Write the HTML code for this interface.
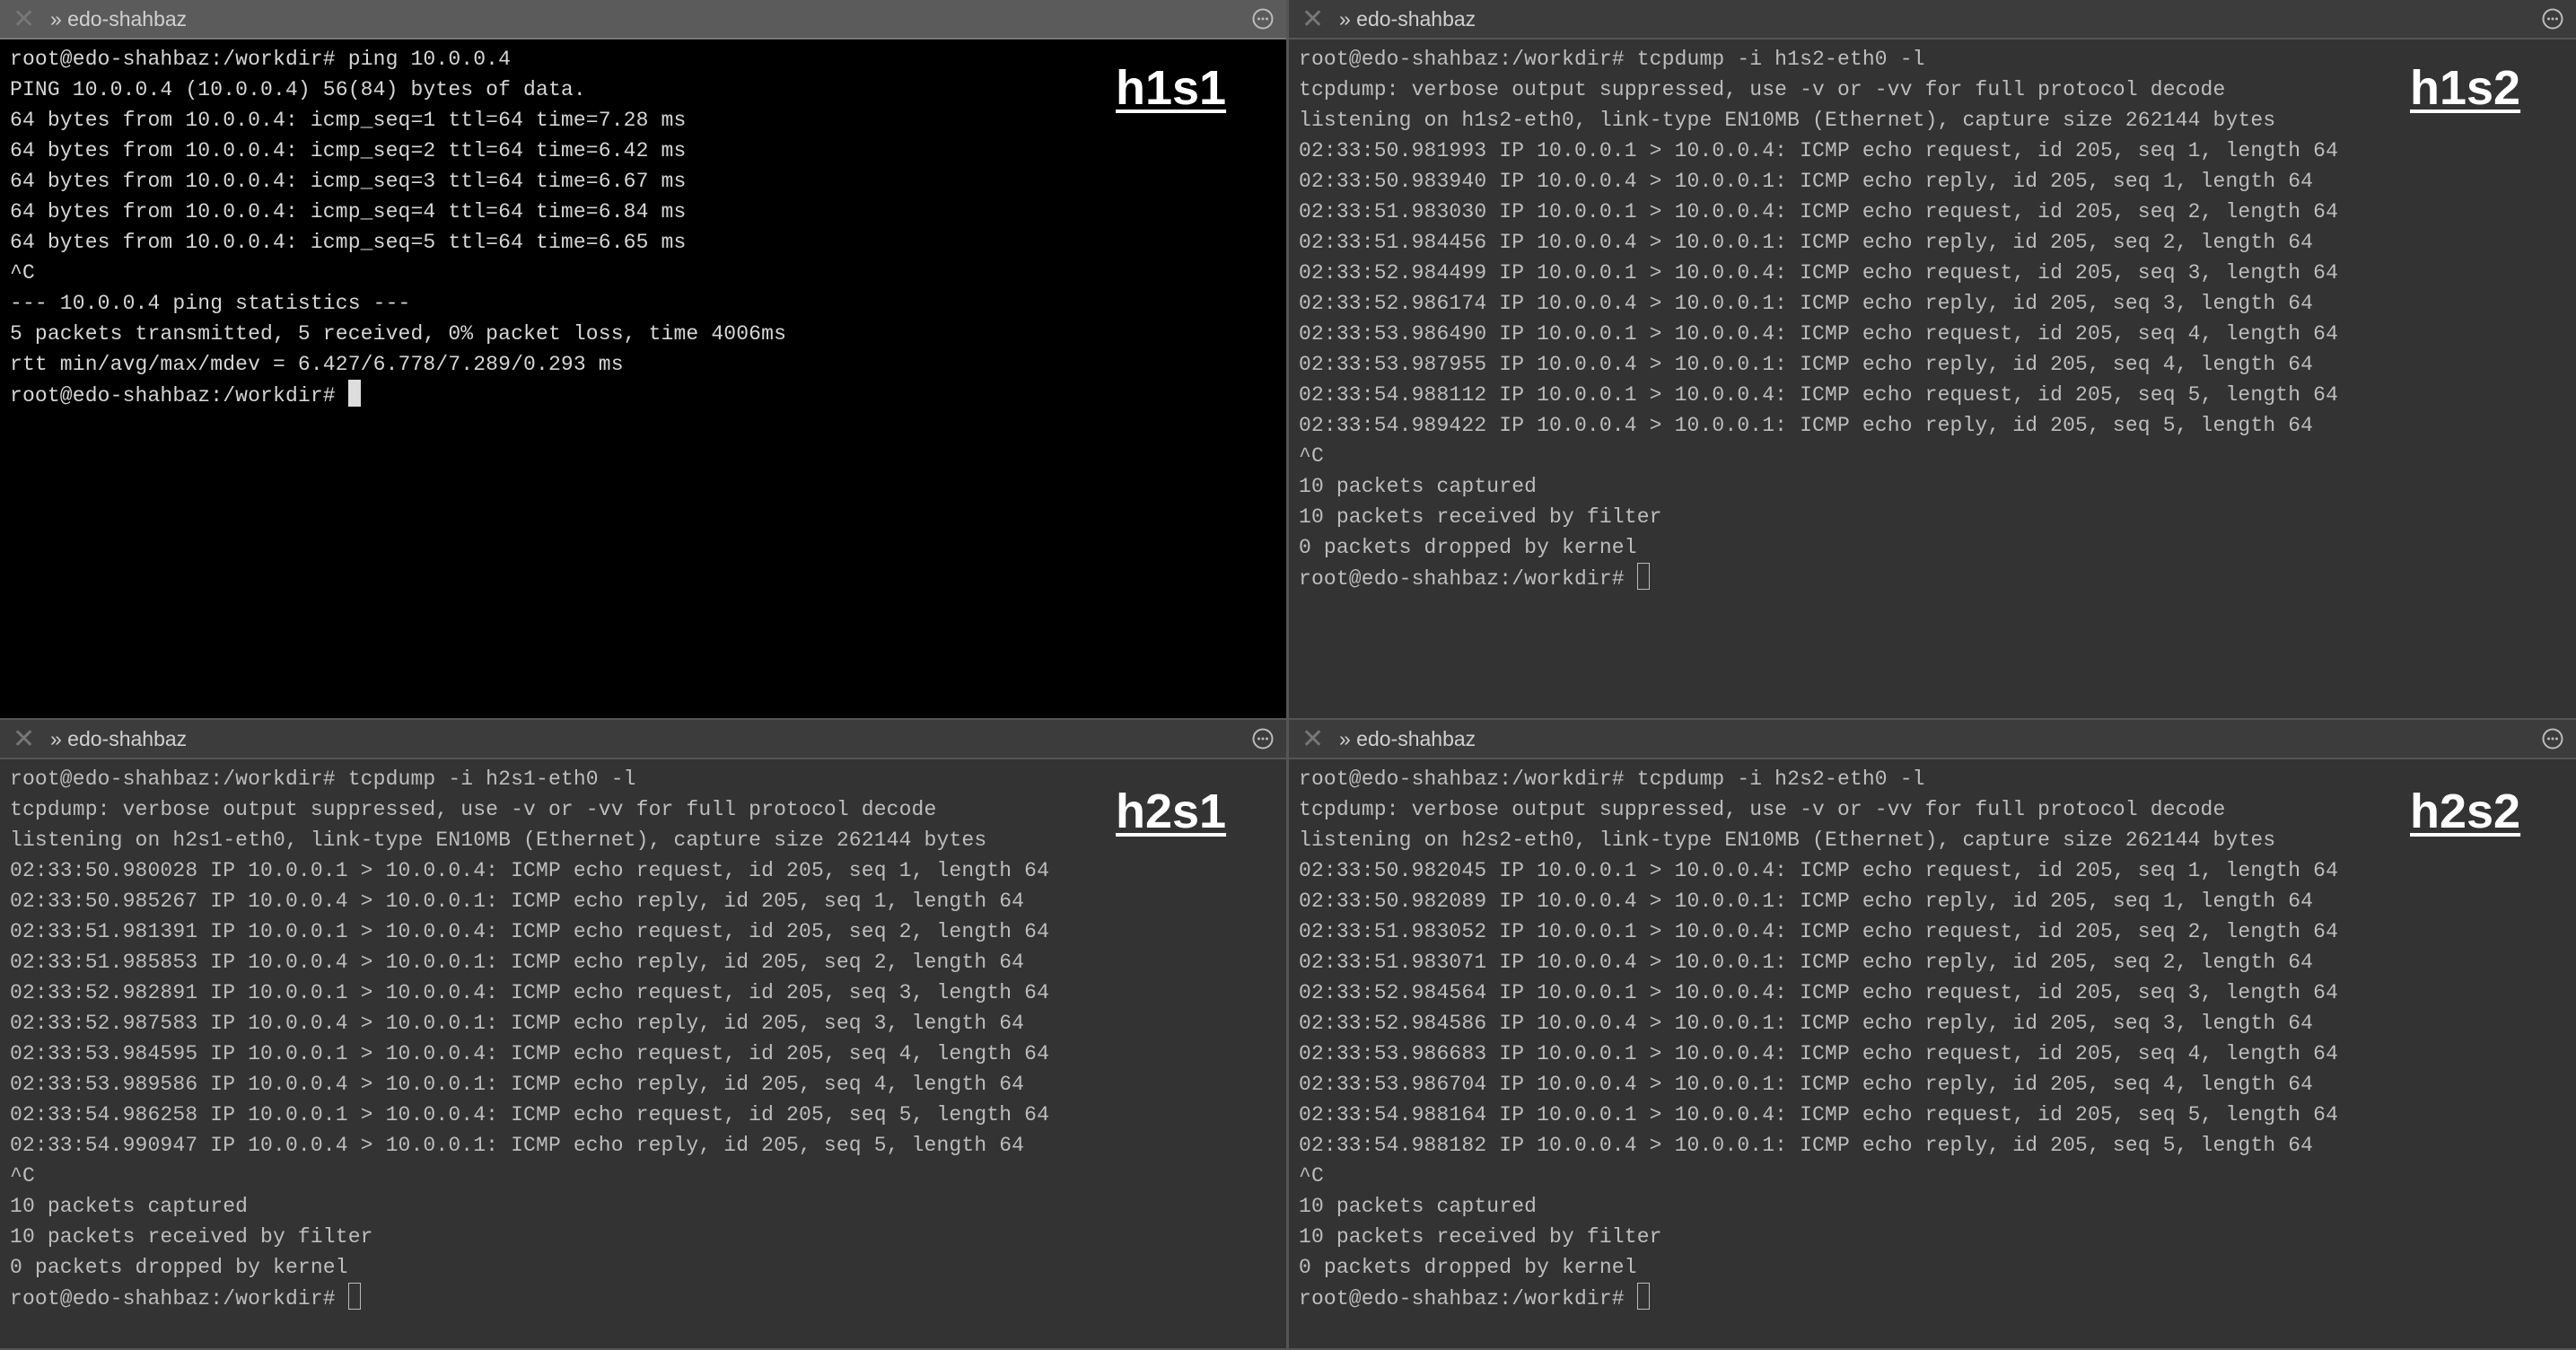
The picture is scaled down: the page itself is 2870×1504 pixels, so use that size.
<!DOCTYPE html>
<html><head><meta charset="utf-8"><style>
body{margin:0;width:2870px;height:1504px;background:#555;position:relative;overflow:hidden;font-family:"Liberation Mono",monospace}
.p{position:absolute;background:#333;overflow:hidden}
.p.a{background:#000}
.h{position:absolute;left:0;right:0;top:0;height:42px;background:#3c3c3c;border-bottom:2px solid #555;font-family:"Liberation Sans",sans-serif;font-size:23px;color:#d0d0d0}
.a .h{background:#5b5b5b;border-bottom-color:#777}
.h .x{position:absolute;left:14px;top:4px;font-size:30px;color:#777;font-weight:300}
.h .t{position:absolute;left:56px;top:8px}
.h svg{position:absolute;right:14px;top:9px}
pre{position:absolute;left:11px;top:49px;margin:0;font-size:23px;letter-spacing:0.15px;line-height:34px;color:#bdbdbd;font-family:"Liberation Mono",monospace}
.a pre{color:#d6d6d6}
.l{position:absolute;font-family:"Liberation Sans",sans-serif;font-weight:bold;font-size:54px;color:#fff;text-decoration:underline;text-decoration-thickness:4px;text-underline-offset:6px}
.c{display:inline-block;width:12px;height:28px;border:1px solid #bbb;vertical-align:-6px}
.a .c{background:#ddd;border-color:#ddd}
</style></head><body>
<div class="p a" style="left:0;top:0;width:1433px;height:800px">
<div class="h"><span class="x">✕</span><span class="t">» edo-shahbaz</span><svg width="24" height="24" viewBox="0 0 24 24"><circle cx="12" cy="12" r="10.5" fill="none" stroke="#bbb" stroke-width="2"/><circle cx="7.5" cy="12" r="1.5" fill="#bbb"/><circle cx="12" cy="12" r="1.5" fill="#bbb"/><circle cx="16.5" cy="12" r="1.5" fill="#bbb"/></svg></div>
<pre>root@edo-shahbaz:/workdir# ping 10.0.0.4
PING 10.0.0.4 (10.0.0.4) 56(84) bytes of data.
64 bytes from 10.0.0.4: icmp_seq=1 ttl=64 time=7.28 ms
64 bytes from 10.0.0.4: icmp_seq=2 ttl=64 time=6.42 ms
64 bytes from 10.0.0.4: icmp_seq=3 ttl=64 time=6.67 ms
64 bytes from 10.0.0.4: icmp_seq=4 ttl=64 time=6.84 ms
64 bytes from 10.0.0.4: icmp_seq=5 ttl=64 time=6.65 ms
^C
--- 10.0.0.4 ping statistics ---
5 packets transmitted, 5 received, 0% packet loss, time 4006ms
rtt min/avg/max/mdev = 6.427/6.778/7.289/0.293 ms
root@edo-shahbaz:/workdir# <span class="c"></span></pre>
<div class="l" style="left:1243px;top:67px">h1s1</div>
</div>
<div class="p" style="left:1436px;top:0;width:1434px;height:800px">
<div class="h"><span class="x">✕</span><span class="t">» edo-shahbaz</span><svg width="24" height="24" viewBox="0 0 24 24"><circle cx="12" cy="12" r="10.5" fill="none" stroke="#bbb" stroke-width="2"/><circle cx="7.5" cy="12" r="1.5" fill="#bbb"/><circle cx="12" cy="12" r="1.5" fill="#bbb"/><circle cx="16.5" cy="12" r="1.5" fill="#bbb"/></svg></div>
<pre>root@edo-shahbaz:/workdir# tcpdump -i h1s2-eth0 -l
tcpdump: verbose output suppressed, use -v or -vv for full protocol decode
listening on h1s2-eth0, link-type EN10MB (Ethernet), capture size 262144 bytes
02:33:50.981993 IP 10.0.0.1 > 10.0.0.4: ICMP echo request, id 205, seq 1, length 64
02:33:50.983940 IP 10.0.0.4 > 10.0.0.1: ICMP echo reply, id 205, seq 1, length 64
02:33:51.983030 IP 10.0.0.1 > 10.0.0.4: ICMP echo request, id 205, seq 2, length 64
02:33:51.984456 IP 10.0.0.4 > 10.0.0.1: ICMP echo reply, id 205, seq 2, length 64
02:33:52.984499 IP 10.0.0.1 > 10.0.0.4: ICMP echo request, id 205, seq 3, length 64
02:33:52.986174 IP 10.0.0.4 > 10.0.0.1: ICMP echo reply, id 205, seq 3, length 64
02:33:53.986490 IP 10.0.0.1 > 10.0.0.4: ICMP echo request, id 205, seq 4, length 64
02:33:53.987955 IP 10.0.0.4 > 10.0.0.1: ICMP echo reply, id 205, seq 4, length 64
02:33:54.988112 IP 10.0.0.1 > 10.0.0.4: ICMP echo request, id 205, seq 5, length 64
02:33:54.989422 IP 10.0.0.4 > 10.0.0.1: ICMP echo reply, id 205, seq 5, length 64
^C
10 packets captured
10 packets received by filter
0 packets dropped by kernel
root@edo-shahbaz:/workdir# <span class="c"></span></pre>
<div class="l" style="left:1249px;top:67px">h1s2</div>
</div>
<div class="p" style="left:0;top:802px;width:1433px;height:700px">
<div class="h"><span class="x">✕</span><span class="t">» edo-shahbaz</span><svg width="24" height="24" viewBox="0 0 24 24"><circle cx="12" cy="12" r="10.5" fill="none" stroke="#bbb" stroke-width="2"/><circle cx="7.5" cy="12" r="1.5" fill="#bbb"/><circle cx="12" cy="12" r="1.5" fill="#bbb"/><circle cx="16.5" cy="12" r="1.5" fill="#bbb"/></svg></div>
<pre>root@edo-shahbaz:/workdir# tcpdump -i h2s1-eth0 -l
tcpdump: verbose output suppressed, use -v or -vv for full protocol decode
listening on h2s1-eth0, link-type EN10MB (Ethernet), capture size 262144 bytes
02:33:50.980028 IP 10.0.0.1 > 10.0.0.4: ICMP echo request, id 205, seq 1, length 64
02:33:50.985267 IP 10.0.0.4 > 10.0.0.1: ICMP echo reply, id 205, seq 1, length 64
02:33:51.981391 IP 10.0.0.1 > 10.0.0.4: ICMP echo request, id 205, seq 2, length 64
02:33:51.985853 IP 10.0.0.4 > 10.0.0.1: ICMP echo reply, id 205, seq 2, length 64
02:33:52.982891 IP 10.0.0.1 > 10.0.0.4: ICMP echo request, id 205, seq 3, length 64
02:33:52.987583 IP 10.0.0.4 > 10.0.0.1: ICMP echo reply, id 205, seq 3, length 64
02:33:53.984595 IP 10.0.0.1 > 10.0.0.4: ICMP echo request, id 205, seq 4, length 64
02:33:53.989586 IP 10.0.0.4 > 10.0.0.1: ICMP echo reply, id 205, seq 4, length 64
02:33:54.986258 IP 10.0.0.1 > 10.0.0.4: ICMP echo request, id 205, seq 5, length 64
02:33:54.990947 IP 10.0.0.4 > 10.0.0.1: ICMP echo reply, id 205, seq 5, length 64
^C
10 packets captured
10 packets received by filter
0 packets dropped by kernel
root@edo-shahbaz:/workdir# <span class="c"></span></pre>
<div class="l" style="left:1243px;top:71px">h2s1</div>
</div>
<div class="p" style="left:1436px;top:802px;width:1434px;height:700px">
<div class="h"><span class="x">✕</span><span class="t">» edo-shahbaz</span><svg width="24" height="24" viewBox="0 0 24 24"><circle cx="12" cy="12" r="10.5" fill="none" stroke="#bbb" stroke-width="2"/><circle cx="7.5" cy="12" r="1.5" fill="#bbb"/><circle cx="12" cy="12" r="1.5" fill="#bbb"/><circle cx="16.5" cy="12" r="1.5" fill="#bbb"/></svg></div>
<pre>root@edo-shahbaz:/workdir# tcpdump -i h2s2-eth0 -l
tcpdump: verbose output suppressed, use -v or -vv for full protocol decode
listening on h2s2-eth0, link-type EN10MB (Ethernet), capture size 262144 bytes
02:33:50.982045 IP 10.0.0.1 > 10.0.0.4: ICMP echo request, id 205, seq 1, length 64
02:33:50.982089 IP 10.0.0.4 > 10.0.0.1: ICMP echo reply, id 205, seq 1, length 64
02:33:51.983052 IP 10.0.0.1 > 10.0.0.4: ICMP echo request, id 205, seq 2, length 64
02:33:51.983071 IP 10.0.0.4 > 10.0.0.1: ICMP echo reply, id 205, seq 2, length 64
02:33:52.984564 IP 10.0.0.1 > 10.0.0.4: ICMP echo request, id 205, seq 3, length 64
02:33:52.984586 IP 10.0.0.4 > 10.0.0.1: ICMP echo reply, id 205, seq 3, length 64
02:33:53.986683 IP 10.0.0.1 > 10.0.0.4: ICMP echo request, id 205, seq 4, length 64
02:33:53.986704 IP 10.0.0.4 > 10.0.0.1: ICMP echo reply, id 205, seq 4, length 64
02:33:54.988164 IP 10.0.0.1 > 10.0.0.4: ICMP echo request, id 205, seq 5, length 64
02:33:54.988182 IP 10.0.0.4 > 10.0.0.1: ICMP echo reply, id 205, seq 5, length 64
^C
10 packets captured
10 packets received by filter
0 packets dropped by kernel
root@edo-shahbaz:/workdir# <span class="c"></span></pre>
<div class="l" style="left:1249px;top:71px">h2s2</div>
</div>
</body></html>
